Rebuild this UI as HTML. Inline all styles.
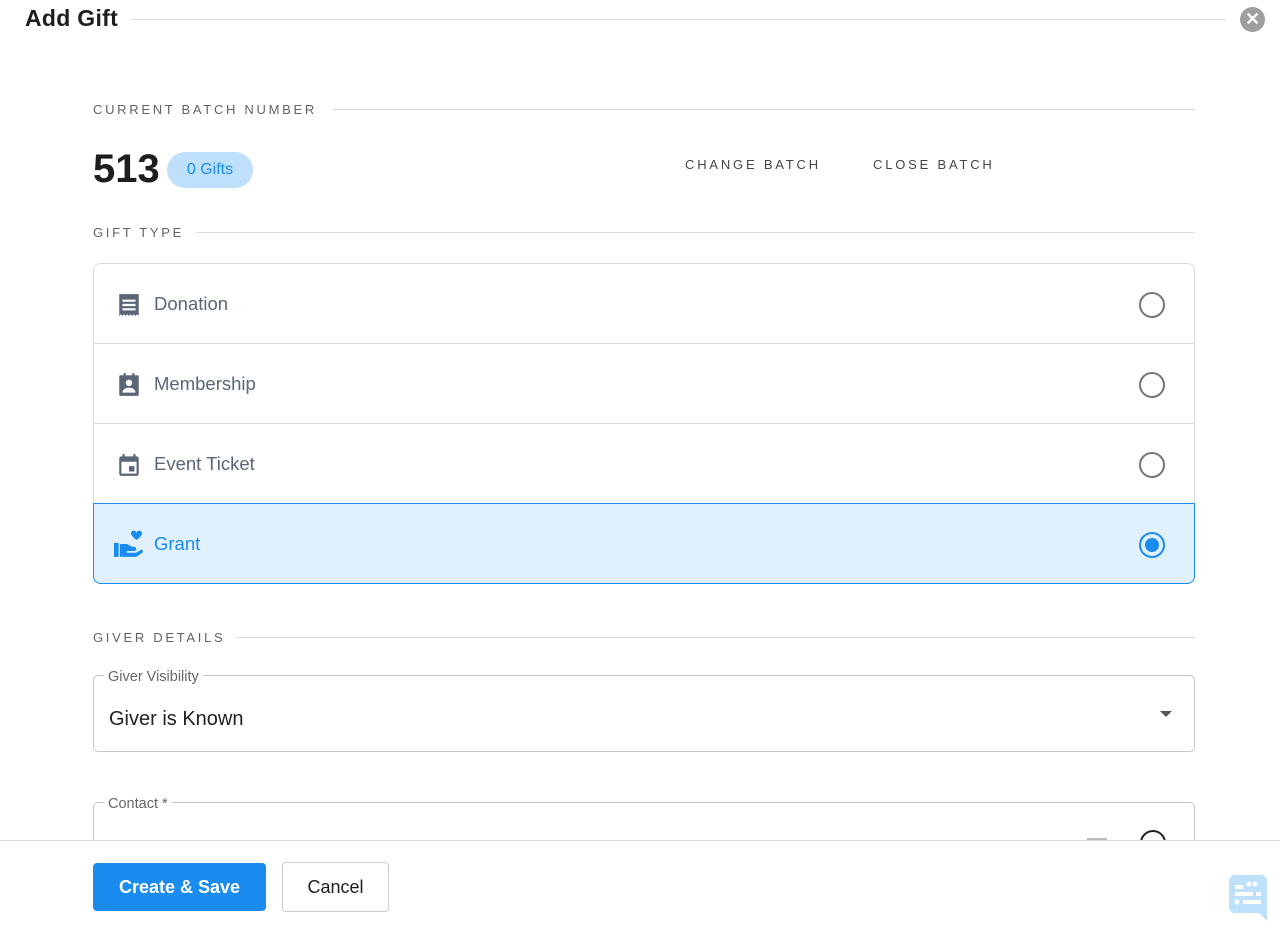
<!DOCTYPE html>
<html><head><style>
*{box-sizing:border-box;margin:0;padding:0}
body{width:1280px;height:929px;overflow:hidden;background:#fff;font-family:"Liberation Sans",sans-serif;position:relative;color:#1d1d1f}
.abs{position:absolute}
.sec{position:absolute;left:93px;font-size:13px;letter-spacing:2.7px;color:#5f6368}
.line{position:absolute;height:1px;background:#dcdcdc}
.row{position:absolute;left:0;width:1102px;height:80px;border-bottom:1px solid #dcdcdc}
.row .t{position:absolute;left:60px;top:29px;font-size:18.5px;color:#5a6577}
.row svg.ic{position:absolute;left:22px;top:28px}
.radio{position:absolute;left:1045px;top:28px;width:26px;height:26px;border:2px solid #767676;border-radius:50%}
</style></head><body>
<div class="abs" style="left:25px;top:5px;font-size:23px;font-weight:bold;letter-spacing:0.3px">Add Gift</div>
<div class="line" style="left:132px;top:19px;width:1094px"></div>
<div class="abs" style="left:1240px;top:7px;width:25px;height:25px;border-radius:50%;background:#9e9e9e;color:#fff;font-size:18px;font-weight:bold;text-align:center;line-height:25px">✕</div>

<div class="sec" style="top:102px">CURRENT BATCH NUMBER</div>
<div class="line" style="left:333px;top:109px;width:862px"></div>
<div class="abs" style="left:93px;top:147px;font-size:40px;font-weight:bold">513</div>
<div class="abs" style="left:167px;top:152px;width:86px;height:36px;border-radius:18px;background:#bfe0fb;color:#1a8cf0;font-size:16px;text-align:center;line-height:36px">0 Gifts</div>
<div class="abs" style="left:685px;top:157px;font-size:13px;letter-spacing:2.8px;color:#444">CHANGE BATCH</div>
<div class="abs" style="left:873px;top:157px;font-size:13px;letter-spacing:2.8px;color:#444">CLOSE BATCH</div>

<div class="sec" style="top:225px">GIFT TYPE</div>
<div class="line" style="left:196px;top:232px;width:999px"></div>
<div class="abs" style="left:93px;top:263px;width:1102px;height:321px;border:1px solid #dcdcdc;border-radius:8px;overflow:hidden">
<div class="row" style="top:0"><svg class="ic" width="26" height="26" viewBox="0 0 24 24"><path fill="#5a6577" d="M3 2h18v20l-1.5-1.5L18 22l-1.5-1.5L15 22l-1.5-1.5L12 22l-1.5-1.5L9 22l-1.5-1.5L6 22l-1.5-1.5L3 22z"/><path fill="#fff" d="M6 7h12v2H6zM6 11h12v2H6zM6 15h12v2H6z"/></svg><div class="t">Donation</div><div class="radio"></div></div>
<div class="row" style="top:80px"><svg class="ic" width="26" height="26" viewBox="0 0 24 24"><path fill="#5a6577" d="M4 3h3V1h2v2h6V1h2v2h3a1 1 0 011 1v17a1 1 0 01-1 1H4a1 1 0 01-1-1V4a1 1 0 011-1z"/><circle cx="12" cy="10" r="3" fill="#fff"/><path fill="#fff" d="M6 19c0-3 3-4.5 6-4.5s6 1.5 6 4.5z"/></svg><div class="t">Membership</div><div class="radio"></div></div>
<div class="row" style="top:160px"><svg class="ic" width="26" height="26" viewBox="0 0 24 24"><path fill="#5a6577" d="M19 4h-1V2h-2v2H8V2H6v2H5a2 2 0 00-2 2v14a2 2 0 002 2h14a2 2 0 002-2V6a2 2 0 00-2-2zm0 16H5V9h14zM12 13h5v5h-5z"/></svg><div class="t">Event Ticket</div><div class="radio"></div></div>
<div class="row" style="top:240px;height:80px;background:#e1f0fd;border:none"><svg class="ic" width="30" height="28" viewBox="0 0 24 24" style="left:19px;top:26px"><path fill="#1a8cf0" d="M15 1.5c1.2-1.5 4-1.2 4.3 1.2.3-2.4 3.1-2.7 4.3-1.2 1.2 1.6.2 3.6-4.3 7.2-4.5-3.6-5.5-5.6-4.3-7.2zM0 11h4v12H0zM5 12h6l5 2.5h2a2 2 0 010 3.5h-7v1.5h8l5-3 1 2.5-6 4H5z"/></svg><div class="t" style="color:#1a8cf0">Grant</div><div class="radio" style="border-color:#1a8cf0"><div style="position:absolute;left:4px;top:4px;width:14px;height:14px;border-radius:50%;background:#1a8cf0"></div></div></div>
</div>
<div class="abs" style="left:93px;top:503px;width:1102px;height:81px;border:1px solid #1a8cf0;border-radius:0 0 8px 8px"></div>

<div class="sec" style="top:630px">GIVER DETAILS</div>
<div class="line" style="left:236px;top:637px;width:959px"></div>
<div class="abs" style="left:93px;top:675px;width:1102px;height:77px;border:1px solid #c4c4c4;border-radius:5px"></div>
<div class="abs" style="left:104px;top:669px;padding:0 4px;background:#fff;font-size:14.5px;color:#666">Giver Visibility</div>
<div class="abs" style="left:109px;top:708px;font-size:20px;color:#222">Giver is Known</div>
<div class="abs" style="left:1160px;top:711px;border-left:6px solid transparent;border-right:6px solid transparent;border-top:6px solid #555"></div>
<div class="abs" style="left:93px;top:802px;width:1102px;height:60px;border:1px solid #c4c4c4;border-radius:5px"></div>
<div class="abs" style="left:104px;top:796px;padding:0 4px;background:#fff;font-size:14.5px;color:#666">Contact *</div>
<div class="abs" style="left:1087px;top:838px;width:20px;height:4px;background:#bbb"></div>
<div class="abs" style="left:1140px;top:830px;width:26px;height:26px;border:2px solid #222;border-radius:50%"></div>

<div class="abs" style="left:0;top:840px;width:1280px;height:89px;background:#fff;border-top:1px solid #dcdcdc"></div>
<div class="abs" style="left:93px;top:863px;width:173px;height:48px;background:#1a8cf0;border-radius:4px;color:#fff;font-size:18px;font-weight:bold;text-align:center;line-height:48px">Create &amp; Save</div>
<div class="abs" style="left:282px;top:862px;width:107px;height:50px;border:1px solid #ccc;border-radius:4px;font-size:18px;text-align:center;line-height:48px">Cancel</div>
<svg class="abs" style="left:1229px;top:875px" width="38" height="46" viewBox="0 0 38 46"><path fill="#bfe0fb" d="M6 0h26a6 6 0 016 6v40l-8-8H6a6 6 0 01-6-6V6a6 6 0 016-6z"/><g fill="#fff"><rect x="6" y="10" width="8" height="4"/><circle cx="20" cy="9" r="2.5"/><circle cx="26" cy="9" r="2.5"/><rect x="6" y="17" width="18" height="4"/><rect x="27" y="17" width="5" height="4"/><circle cx="8" cy="27" r="2.5"/><rect x="14" y="25" width="18" height="4"/></g></svg>
</body></html>
